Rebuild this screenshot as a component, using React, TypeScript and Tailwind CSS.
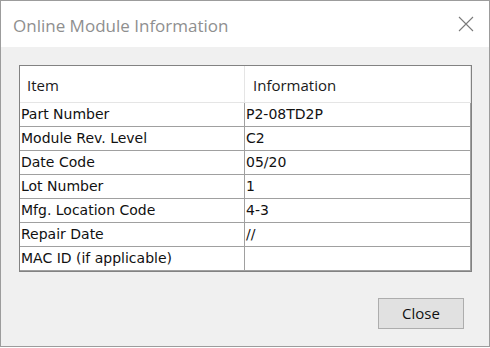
const rows: [string, string][] = [
  ['Part Number', 'P2-08TD2P'],
  ['Module Rev. Level', 'C2'],
  ['Date Code', '05/20'],
  ['Lot Number', '1'],
  ['Mfg. Location Code', '4-3'],
  ['Repair Date', '//'],
  ['MAC ID (if applicable)', ''],
]

const uiFont = { fontFamily: '"Open Sans", "Noto Sans", sans-serif' }
const cellFont = { fontFamily: '"DejaVu Sans", sans-serif' }

export default function App() {
  return (
    <div className="h-[348px] w-[490px] bg-white">
      <div className="flex h-[347px] w-[490px] flex-col border border-[#9c9c9c]">
        {/* title bar */}
        <div className="flex h-[46px] items-center justify-between bg-white pl-[12px] pr-[15px]">
          <span className="pt-[4px] text-[17px] text-[#8f8f8f]" style={uiFont}>
            Online Module Information
          </span>
          <svg width="16" height="16" viewBox="0 0 16 16" aria-hidden="true">
            <path d="M1 1 L15 15 M15 1 L1 15" stroke="#7a7a7a" strokeWidth="1.1" fill="none" />
          </svg>
        </div>

        {/* body */}
        <div className="flex flex-1 flex-col bg-[#f0f0f0] pl-[18px] pr-[25px] pt-[18px]">
          <div className="w-[453px] border border-[#828282] bg-white">
            <div className="flex h-[37px] border-b border-[#e5e5e5] text-[15px] text-[#1a1a1a]" style={uiFont}>
              <div className="flex w-[225px] items-center border-r border-[#e5e5e5] pl-[7px] pt-[2px]">Item</div>
              <div className="flex flex-1 items-center border-r border-[#e5e5e5] pl-[8px] pt-[2px]">Information</div>
            </div>
            {rows.map(([item, info]) => (
              <div key={item} className="flex h-[24px] border-b border-[#a0a0a0] text-[14px] text-[#111]" style={cellFont}>
                <div className="flex w-[225px] items-center border-r border-[#a0a0a0] pl-[1px]">{item}</div>
                <div className="flex flex-1 items-center border-r border-[#a0a0a0] pl-[1px]">{info}</div>
              </div>
            ))}
          </div>

          <div className="mt-[26px] flex justify-end">
            <button
              type="button"
              className="h-[31px] w-[86px] border border-[#adadad] bg-[#e1e1e1] text-[15px] text-[#111]"
              style={uiFont}
            >
              Close
            </button>
          </div>
        </div>
      </div>
    </div>
  )
}
